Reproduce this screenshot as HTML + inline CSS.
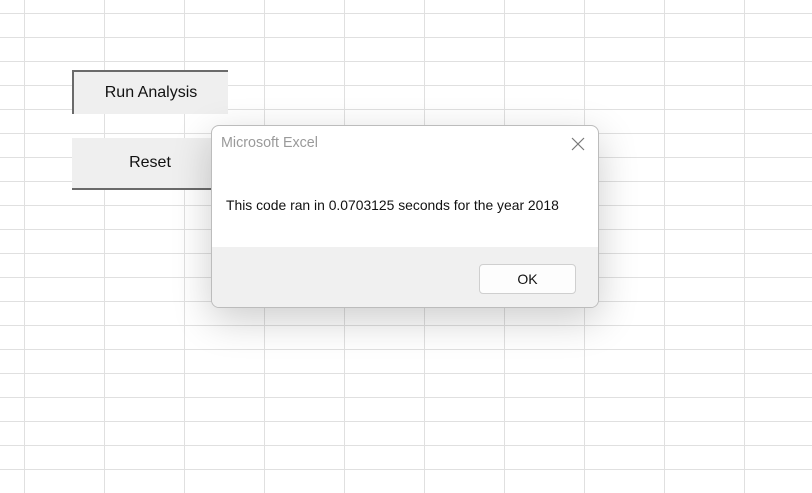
<!DOCTYPE html>
<html><head><style>
body{margin:0;width:812px;height:493px;overflow:hidden;background:#fff;font-family:"Segoe UI","Liberation Sans",sans-serif;position:relative}
.grid{position:absolute;inset:0;background-image:linear-gradient(to right,#e0e0e0 1px,transparent 1px),linear-gradient(to bottom,#e0e0e0 1px,transparent 1px);background-size:80px 24px;background-position:24px 13px}
.btn{position:absolute;background:#efefef;font-size:16px;color:#111;display:flex;align-items:center;justify-content:center;box-sizing:border-box}
.dlg{position:absolute;left:211px;top:125px;width:388px;height:183px;background:#fff;border:1px solid #bcbcbc;border-radius:8px;box-sizing:border-box;overflow:hidden;box-shadow:0 12px 40px rgba(0,0,0,.2)}
</style></head><body>
<div class="grid"></div>
<div class="btn" style="left:72px;top:70px;width:156px;height:44px;border-top:2px solid #6a6a6a;border-left:2px solid #6a6a6a">Run Analysis</div>
<div class="btn" style="left:72px;top:138px;width:156px;height:52px;border-bottom:2px solid #6a6a6a">Reset</div>
<div class="dlg">
<div style="position:absolute;left:9px;top:9px;font-size:14.3px;color:#9a9a9a">Microsoft Excel</div>
<svg style="position:absolute;left:359px;top:11px" width="14" height="14"><path d="M1 1L13 13M13 1L1 13" stroke="#777" stroke-width="1.2"/></svg>
<div style="position:absolute;left:14px;top:71px;font-size:13.9px;color:#111">This code ran in 0.0703125 seconds for the year 2018</div>
<div style="position:absolute;left:0;right:0;top:121px;bottom:0;background:#f0f0f0"></div>
<div style="position:absolute;left:267px;top:138px;width:97px;height:30px;background:#fdfdfd;border:1px solid #cfcfcf;border-radius:4px;box-sizing:border-box;display:flex;align-items:center;justify-content:center;font-size:14px;color:#111">OK</div>
</div>
</body></html>
